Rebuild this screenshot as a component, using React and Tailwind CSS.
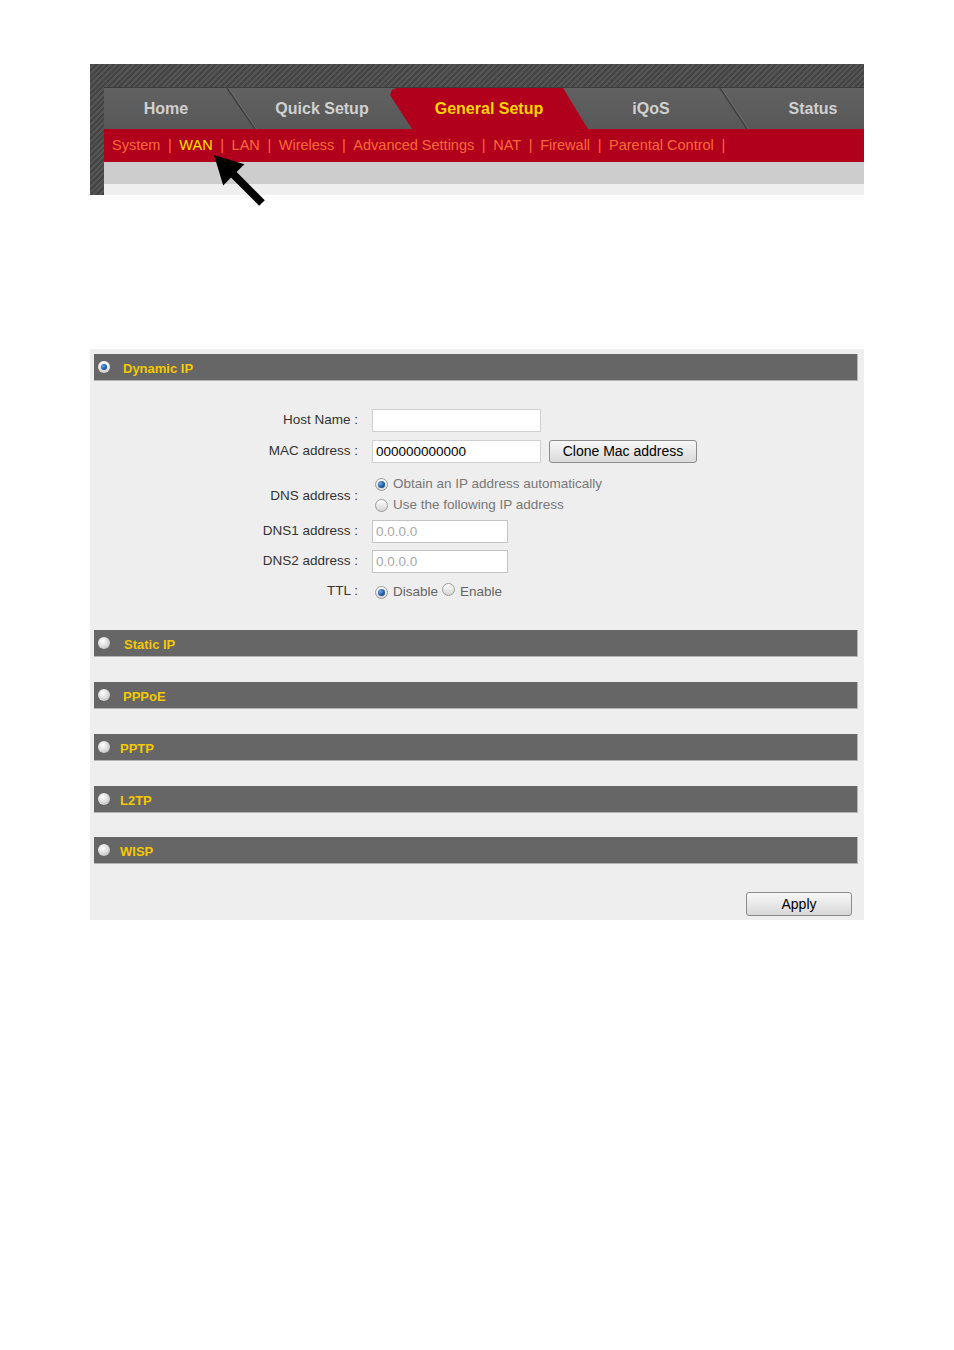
import React from "react";

function Radio({ checked, size = 13 }) {
  return (
    <span
      className={
        "inline-flex shrink-0 items-center justify-center rounded-full border border-[#9a9a9a] bg-gradient-to-b from-[#ffffff] to-[#d4d4d4] " +
        (size === 13 ? "h-[13px] w-[13px]" : "h-[12px] w-[12px]")
      }
    >
      {checked && (
        <span className="h-[7px] w-[7px] rounded-full bg-[radial-gradient(circle_at_35%_35%,#6fa8e8,#1d5aa8_55%,#0a2f66)]" />
      )}
    </span>
  );
}

function HeadRadio({ checked }) {
  if (checked) {
    return (
      <span className="inline-flex h-[12px] w-[12px] shrink-0 items-center justify-center rounded-full bg-gradient-to-b from-[#ffffff] to-[#cfcfcf]">
        <span className="h-[6px] w-[6px] rounded-full bg-[radial-gradient(circle_at_35%_35%,#5fa0e6,#1a5aa8_60%,#0a2f66)]" />
      </span>
    );
  }
  return (
    <span className="inline-block h-[12px] w-[12px] shrink-0 rounded-full bg-[radial-gradient(circle_at_40%_35%,#ffffff,#d8d8d8_55%,#a8a8a8)]" />
  );
}

function SectionHead({ title, checked, pad }) {
  return (
    <div className="flex h-[27px] items-center border-b border-r border-[#b4b4b4] bg-[#666666] pl-[4px]">
      <HeadRadio checked={checked} />
      <span className={"pt-[4px] text-[13px] font-bold text-[#f5c800] " + pad}>{title}</span>
    </div>
  );
}

function Label({ children, className = "" }) {
  return (
    <div className={"w-[264px] shrink-0 text-right text-[13.5px] text-[#333333] " + className}>
      {children}
    </div>
  );
}

const tabs = [
  { name: "Home", w: "w-[137px]", pad: "pr-[13px]" },
  { name: "Quick Setup", w: "w-[149px]", pad: "pl-[13px]" },
  { name: "General Setup", w: "w-[198px]", pad: "pl-[0px]", active: true },
  { name: "iQoS", w: "w-[146px]", pad: "pr-[20px]" },
  { name: "Status", w: "w-[130px]", pad: "pl-[28px]" },
];

const sub = ["System", "WAN", "LAN", "Wireless", "Advanced Settings", "NAT", "Firewall", "Parental Control"];

export default function App() {
  return (
    <div className="min-h-[1350px] bg-white font-['Liberation_Sans',Arial,sans-serif]">
      {/* Top navigation */}
      <div className="px-[90px] pt-[64px]">
        <div className="relative flex h-[131px] bg-[repeating-linear-gradient(135deg,#444444_0px,#444444_2px,#555555_2px,#555555_4px)]">
          <div className="w-[14px] shrink-0" />
          <div className="flex flex-1 flex-col">
            <div className="h-[23px]" />
            <div className="relative flex h-[42px] border-t border-[#3c3c3c] bg-gradient-to-b from-[#616161] to-[#585858]">
              {tabs.map((t) =>
                t.active ? (
                  <div
                    key={t.name}
                    className={
                      "flex h-full items-center justify-center bg-[#b1001b] text-[16px] font-bold text-[#ffd400] [clip-path:polygon(0px_7px,2px_2px,7px_0px,173px_0px,198px_100%,22px_100%)] " +
                      t.w
                    }
                  >
                    <span>{t.name}</span>
                  </div>
                ) : (
                  <div
                    key={t.name}
                    className={"flex h-full items-center justify-center text-[16px] font-bold text-[#d0d0d0] " + t.w}
                  >
                    <span className={t.pad}>{t.name}</span>
                  </div>
                )
              )}
              <svg className="pointer-events-none absolute inset-0 h-full w-full" viewBox="0 0 760 42" preserveAspectRatio="none">
                <line x1="123" y1="0" x2="151" y2="42" stroke="#3f3f3f" strokeWidth="1.5" />
                <line x1="124.5" y1="0" x2="152.5" y2="42" stroke="#6c6c6c" strokeWidth="1" />
                <line x1="616" y1="0" x2="643" y2="42" stroke="#3f3f3f" strokeWidth="1.5" />
                <line x1="617.5" y1="0" x2="644.5" y2="42" stroke="#6c6c6c" strokeWidth="1" />
              </svg>
            </div>
            <div className="flex h-[33px] items-center bg-[#b1001b] pl-[8px] pt-[1px] text-[14.5px] text-[#ff6a38]">
              {sub.map((s) => (
                <React.Fragment key={s}>
                  <span className={s === "WAN" ? "text-[#ffe100]" : ""}>{s}</span>
                  <span className="px-[7.6px]">|</span>
                </React.Fragment>
              ))}
            </div>
            <div className="h-[22px] bg-[#cdcdcd]" />
            <div className="h-[11px] bg-[#efefef]" />
          </div>
          {/* arrow */}
          <svg className="absolute left-[115px] top-[86px] h-[60px] w-[60px]" viewBox="0 0 60 60">
            <polygon
              points="9,5 39.4,14.2 31.6,22 59.8,50.2 54.2,55.8 26,27.6 18.2,35.4"
              fill="#000000"
            />
          </svg>
        </div>
      </div>

      {/* WAN panel */}
      <div className="mx-[90px] mt-[154px] bg-[#eeeeee] pb-[4px] pl-[4px] pr-[6px] pt-[5px]">
        <SectionHead title="Dynamic IP" checked pad="pl-[13px]" />

        <div className="mt-[28px] flex flex-col">
          <div className="flex h-[23px] items-center">
            <Label>Host Name :</Label>
            <div className="ml-[14px] h-[23px] w-[169px] border border-[#cfcfcf] bg-white" />
          </div>
          <div className="mt-[8px] flex h-[23px] items-center">
            <Label>MAC address :</Label>
            <div className="ml-[14px] flex h-[23px] w-[169px] items-center border border-[#cfcfcf] bg-white px-[3px] pt-[1px] text-[13.5px] text-black">
              000000000000
            </div>
            <button className="ml-[8px] h-[23px] w-[148px] rounded-[3px] border border-[#8c8c8c] bg-gradient-to-b from-[#f8f8f8] to-[#dadada] text-[14px] text-black">
              Clone Mac address
            </button>
          </div>
          <div className="mt-[11px] flex h-[42px] items-center">
            <Label className="pt-[2px]">DNS address :</Label>
            <div className="ml-[17px] flex flex-col text-[13.5px] text-[#777777]">
              <div className="flex h-[21px] items-center gap-[5px]">
                <Radio checked />
                <span>Obtain an IP address automatically</span>
              </div>
              <div className="flex h-[21px] items-center gap-[5px]">
                <Radio />
                <span>Use the following IP address</span>
              </div>
            </div>
          </div>
          <div className="mt-[4px] flex h-[23px] items-center">
            <Label>DNS1 address :</Label>
            <div className="ml-[14px] flex h-[23px] w-[136px] items-center border border-[#c4c4c4] bg-white px-[3px] pt-[1px] text-[13.5px] text-[#a8a8a8]">
              0.0.0.0
            </div>
          </div>
          <div className="mt-[7px] flex h-[23px] items-center">
            <Label>DNS2 address :</Label>
            <div className="ml-[14px] flex h-[23px] w-[136px] items-center border border-[#c4c4c4] bg-white px-[3px] pt-[1px] text-[13.5px] text-[#a8a8a8]">
              0.0.0.0
            </div>
          </div>
          <div className="mt-[9px] flex h-[20px] items-center">
            <Label className="pb-[1px]">TTL :</Label>
            <div className="ml-[17px] flex items-center pt-[1px] text-[13.5px] text-[#666666]">
              <Radio checked />
              <span className="ml-[5px]">Disable</span>
              <span className="ml-[4px]">
                <Radio />
              </span>
              <span className="ml-[5px]">Enable</span>
            </div>
          </div>
        </div>

        <div className="mt-[28px]">
          <SectionHead title="Static IP" pad="pl-[14px]" />
        </div>
        <div className="mt-[25px]">
          <SectionHead title="PPPoE" pad="pl-[13px]" />
        </div>
        <div className="mt-[25px]">
          <SectionHead title="PPTP" pad="pl-[10px]" />
        </div>
        <div className="mt-[25px]">
          <SectionHead title="L2TP" pad="pl-[10px]" />
        </div>
        <div className="mt-[24px]">
          <SectionHead title="WISP" pad="pl-[10px]" />
        </div>

        <div className="mt-[28px] flex justify-end pr-[6px]">
          <button className="h-[24px] w-[106px] rounded-[3px] border border-[#8c8c8c] bg-gradient-to-b from-[#f8f8f8] to-[#d8d8d8] pt-[1px] text-[14px] text-black">
            Apply
          </button>
        </div>
      </div>
    </div>
  );
}
